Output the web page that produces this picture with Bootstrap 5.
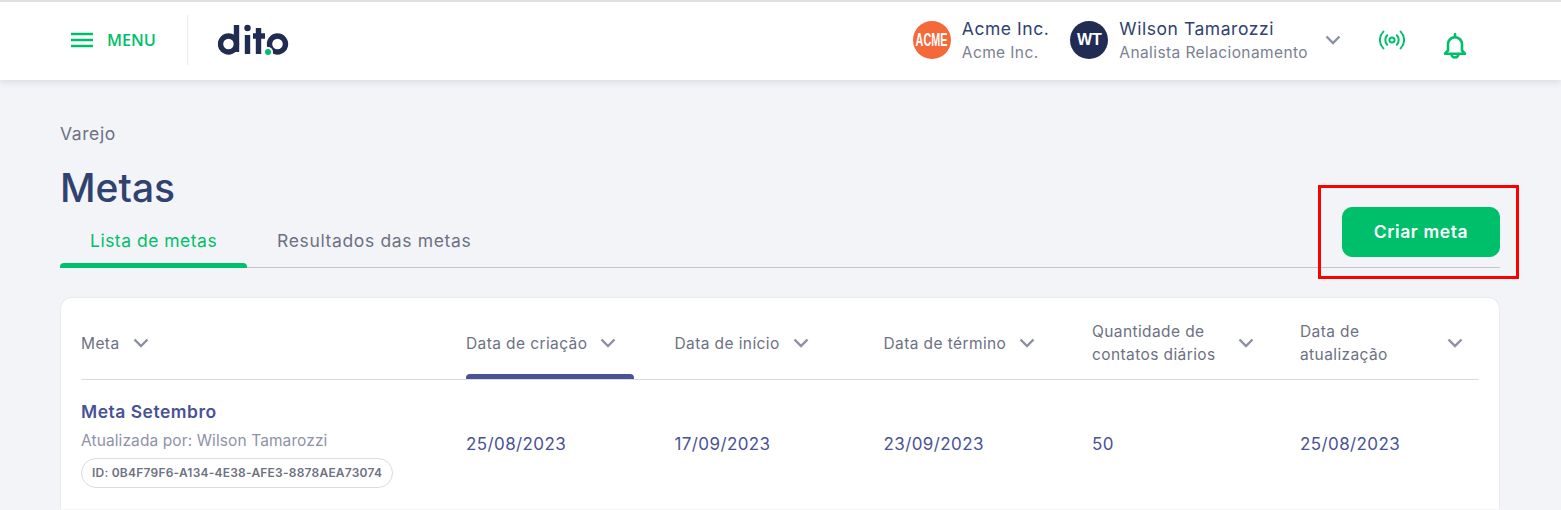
<!DOCTYPE html>
<html lang="pt-BR">
<head>
    <meta charset="UTF-8">
    <meta name="viewport" content="width=device-width, initial-scale=1.0">
    <title>Metas</title>
    <link href="https://cdn.jsdelivr.net/npm/bootstrap@5.3.0/dist/css/bootstrap.min.css" rel="stylesheet">
    <style>
        html, body { height: 510px; overflow: hidden; }
        body { background: #f3f4f8; font-family: Inter, "Noto Sans", sans-serif; position: relative; }

        /* header */
        .top-bar { height: 80px; background: #fff; border-top: 2px solid #dfdfe2; box-shadow: 0 1px 8px rgba(60, 65, 90, .18); padding: 0 0 2px 71px; }
        .menu-btn { color: #00bf6a; font-family: "Open Sans", sans-serif; font-size: 16.3px; font-weight: 600; gap: 14px; background: none; border: 0; padding: 0; }
        .bar-divider { width: 1px; height: 50px; background: #ebebee; margin: 0 30px 0 31px; }
        .org-block { line-height: 1; margin-left: 11px; }
        .org-name { color: #2f4270; font-size: 17.5px; letter-spacing: .55px; margin-bottom: 7px; }
        .org-sub { color: #7b7f92; font-size: 15.5px; letter-spacing: .4px; }
        .avatar { width: 38px; height: 38px; border-radius: 50%; color: #fff; font-family: "Liberation Sans", sans-serif; font-weight: 700; flex: none; overflow: hidden; }
        .avatar-acme { background: #f4683a; font-size: 18px; }
        .avatar-acme span { transform: scaleX(.6); }
        .avatar-user { background: #212c52; font-size: 16px; }
        .user-chevron { margin-left: 17px; }

        /* title area */
        .page-area { padding: 44px 61px 0 60px; }
        .crumb { color: #6d7183; font-size: 17.5px; line-height: 20px; letter-spacing: .6px; }
        .page-title { color: #2f4270; font-size: 39px; font-weight: 500; line-height: 46px; margin: 21px 0 0; }
        .tabs-row { border-bottom: 1px solid #c4c5cb; height: 62px; margin-top: -5px; }
        .tab-list { gap: 30px; }
        .tab-link { color: #6d7183; font-size: 17.5px; letter-spacing: .65px; padding: 0 0 17px; margin-bottom: -1px; line-height: 20px; position: relative; }
        .tab-link:hover { color: #6d7183; }
        .tab-link.active { color: #00bf6a; padding-left: 30px; padding-right: 0; width: 187px; letter-spacing: .5px; }
        .tab-link.active::after { content: ""; position: absolute; left: 0; right: 0; bottom: 0; height: 5px; background: #00bf6a; border-radius: 4px 4px 0 0; }
        .btn-create { --bs-btn-bg: #00bf6a; --bs-btn-border-color: #00bf6a; --bs-btn-hover-bg: #00a95e; --bs-btn-hover-border-color: #00a95e; width: 158px; height: 50px; border-radius: 10px; font-size: 17.5px; font-weight: 600; letter-spacing: .6px; margin-bottom: 10px; }

        /* card + table, the page is cut off under the first row */
        .goal-card { margin-top: 29px; border: 1px solid #eaebef; border-bottom: 0; border-radius: 12px 12px 0 0; background: #fff; padding: 0 20px; }
        .goal-table { table-layout: fixed; margin: 0; --bs-table-bg: transparent; }
        .goal-table th { height: 81px; padding: 10px 0 0; vertical-align: middle; font-weight: 400; color: #6d7183; font-size: 15.5px; letter-spacing: .4px; line-height: 23px; border-bottom: 1px solid #d9dbe5; position: relative; }
        .goal-table td { padding: 0; height: 130px; vertical-align: middle; color: #4a5296; font-size: 17px; letter-spacing: .4px; border: 0; }
        .sort-head { display: flex; align-items: center; gap: 13px; }
        .sort-head svg { flex: none; }
        .w-qty { width: 133px; }
        .w-upd { width: 134px; }
        .sorted-mark { position: absolute; left: 0; bottom: 0; width: 168px; height: 5px; background: #4a5296; border-radius: 4px 4px 0 0; }
        .goal-name { color: #4a5296; font-size: 17.5px; font-weight: 600; line-height: 20px; letter-spacing: .5px; margin-top: 2px; }
        .goal-by { color: #8f93a6; font-size: 15.5px; letter-spacing: .1px; line-height: 18px; margin-top: 10px; }
        .goal-id { display: inline-block; margin-top: 8px; height: 30px; line-height: 28px; padding: 0 10px; border: 1px solid #d9dbe5; border-radius: 15px; color: #6d7183; font-size: 12px; letter-spacing: .22px; font-weight: 600; white-space: nowrap; }

        /* red annotation drawn over the screenshot */
        .note-box { position: absolute; left: 1318px; top: 185px; width: 201px; height: 94px; border: 3px solid #f00; pointer-events: none; }
    </style>
</head>
<body>
    <header class="top-bar d-flex align-items-center">
        <button class="menu-btn d-flex align-items-center" type="button">
            <svg width="22" height="16" viewBox="0 0 22 16"><path d="M0 2h22M0 8h22M0 14h22" stroke="#00bf6a" stroke-width="2.4"/></svg>
            MENU
        </button>
        <div class="bar-divider"></div>
        <!-- logo -->
        <svg width="71" height="32" viewBox="0 0 71 32" aria-label="dito">
            <g fill="none" stroke="#212c52" stroke-width="5.4">
                <circle cx="10.5" cy="20" r="8"/>
                <path d="M18.5 1v27"/>
                <path d="M29.5 11v19"/>
                <path d="M40.5 4v26M35 12h12"/>
                <circle cx="59.5" cy="20" r="8"/>
            </g>
            <circle cx="29.5" cy="4" r="3.2" fill="#212c52"/>
            <circle cx="50" cy="28" r="5" fill="#fff"/>
            <circle cx="50" cy="28" r="3" fill="#00bf6a"/>
        </svg>

        <div class="d-flex align-items-center ms-auto">
            <div class="avatar avatar-acme d-flex align-items-center justify-content-center"><span>ACME</span></div>
            <div class="org-block">
                <div class="org-name">Acme Inc.</div>
                <div class="org-sub">Acme Inc.</div>
            </div>
            <div class="avatar avatar-user d-flex align-items-center justify-content-center" style="margin-left:21px">WT</div>
            <div class="org-block">
                <div class="org-name">Wilson Tamarozzi</div>
                <div class="org-sub">Analista Relacionamento</div>
            </div>
            <svg class="user-chevron" width="16" height="10" viewBox="0 0 16 10"><path d="M1.5 1.5 8 8l6.5-6.5" fill="none" stroke="#8b90a5" stroke-width="2.4"/></svg>
            <svg style="margin-left:38px" width="26" height="20" viewBox="0 0 26 20" fill="none" stroke="#00bf6a" stroke-width="2" stroke-linecap="round">
                <circle cx="13" cy="10" r="2.6"/>
                <path d="M8.2 5.2a7 7 0 0 0 0 9.6M17.8 5.2a7 7 0 0 1 0 9.6"/>
                <path d="M4.4 1.6a12 12 0 0 0 0 16.8M21.6 1.6a12 12 0 0 1 0 16.8"/>
            </svg>
            <svg style="margin:14px 94px 0 38px" width="24" height="28" viewBox="0 0 24 28" fill="none" stroke="#00bf6a" stroke-width="2.6" stroke-linejoin="round">
                <path d="M12 4.2a7 7 0 0 0-7 7v6.3l-3 3.2h20l-3-3.2v-6.3a7 7 0 0 0-7-7z"/>
                <path d="M12 1v3M8.5 21a3.5 3.5 0 0 0 7 0" stroke-linecap="round"/>
            </svg>
        </div>
    </header>

    <main class="page-area">
        <div class="crumb">Varejo</div>
        <h1 class="page-title">Metas</h1>
        <div class="tabs-row d-flex justify-content-between align-items-end">
            <ul class="nav tab-list">
                <li class="nav-item"><a class="nav-link tab-link active" href="#">Lista de metas</a></li>
                <li class="nav-item"><a class="nav-link tab-link" href="#">Resultados das metas</a></li>
            </ul>
            <button class="btn btn-success btn-create" type="button">Criar meta</button>
        </div>

        <div class="goal-card">
            <table class="table goal-table">
                <colgroup>
                    <col style="width:385px"><col style="width:208.5px"><col style="width:209px"><col style="width:208.5px"><col style="width:208px"><col>
                </colgroup>
                <thead>
                    <tr>
                        <th><div class="sort-head">Meta <svg width="16" height="10" viewBox="0 0 16 10"><path d="M1.5 1.5 8 8l6.5-6.5" fill="none" stroke="#8b90a5" stroke-width="2.4"/></svg></div></th>
                        <th><div class="sort-head">Data de criação <svg width="16" height="10" viewBox="0 0 16 10"><path d="M1.5 1.5 8 8l6.5-6.5" fill="none" stroke="#8b90a5" stroke-width="2.4"/></svg></div><span class="sorted-mark"></span></th>
                        <th><div class="sort-head">Data de início <svg width="16" height="10" viewBox="0 0 16 10"><path d="M1.5 1.5 8 8l6.5-6.5" fill="none" stroke="#8b90a5" stroke-width="2.4"/></svg></div></th>
                        <th><div class="sort-head">Data de término <svg width="16" height="10" viewBox="0 0 16 10"><path d="M1.5 1.5 8 8l6.5-6.5" fill="none" stroke="#8b90a5" stroke-width="2.4"/></svg></div></th>
                        <th><div class="sort-head"><span class="w-qty">Quantidade de contatos diários</span> <svg width="16" height="10" viewBox="0 0 16 10"><path d="M1.5 1.5 8 8l6.5-6.5" fill="none" stroke="#8b90a5" stroke-width="2.4"/></svg></div></th>
                        <th><div class="sort-head"><span class="w-upd">Data de atualização</span> <svg width="16" height="10" viewBox="0 0 16 10"><path d="M1.5 1.5 8 8l6.5-6.5" fill="none" stroke="#8b90a5" stroke-width="2.4"/></svg></div></th>
                    </tr>
                </thead>
                <tbody>
                    <tr>
                        <td>
                            <div class="goal-name">Meta Setembro</div>
                            <div class="goal-by">Atualizada por: Wilson Tamarozzi</div>
                            <span class="goal-id">ID: 0B4F79F6-A134-4E38-AFE3-8878AEA73074</span>
                        </td>
                        <td>25/08/2023</td>
                        <td>17/09/2023</td>
                        <td>23/09/2023</td>
                        <td>50</td>
                        <td>25/08/2023</td>
                    </tr>
                </tbody>
            </table>
        </div>
    </main>

    <div class="note-box"></div>
</body>
</html>
